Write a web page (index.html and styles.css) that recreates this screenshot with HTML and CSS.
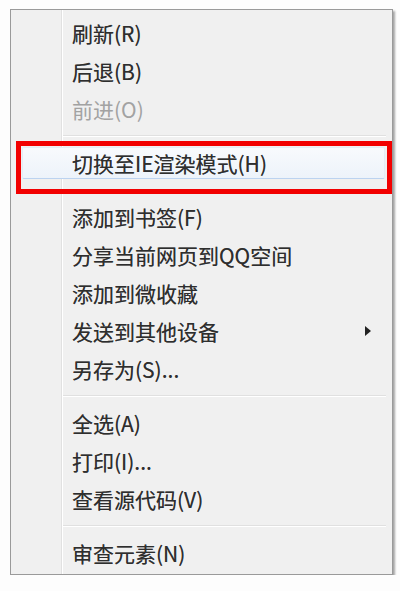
FILE: index.html
```html
<!DOCTYPE html>
<html lang="zh-CN">
<head>
<meta charset="utf-8">
<link rel="stylesheet" href="styles.css">
</head>
<body>
<div class="menu">
  <div class="item">刷新(R)</div>
  <div class="item">后退(B)</div>
  <div class="item disabled">前进(O)</div>
  <div class="sep"></div>
  <div class="item active">切换至IE渲染模式(H)</div>
  <div class="sep"></div>
  <div class="item">添加到书签(F)</div>
  <div class="item">分享当前网页到QQ空间</div>
  <div class="item">添加到微收藏</div>
  <div class="item"><span>发送到其他设备</span><svg class="arrow" width="6" height="10" viewBox="0 0 6 10"><polygon points="0,0 6,5 0,10" fill="#222"/></svg></div>
  <div class="item">另存为(S)...</div>
  <div class="sep"></div>
  <div class="item">全选(A)</div>
  <div class="item">打印(I)...</div>
  <div class="item">查看源代码(V)</div>
  <div class="sep"></div>
  <div class="item">审查元素(N)</div>
</div>
<div class="mark"></div>
</body>
</html>
```
FILE: styles.css
```css
html, body {
  margin: 0;
  padding: 0;
  background: #fdfdfd;
}

body {
  font-family: "Noto Sans CJK SC", "Microsoft YaHei", sans-serif;
  font-size: 21px;
  color: #2e2e2e;
}

.menu {
  margin: 9px 0 0 10px;
  width: 383px;
  box-sizing: border-box;
  border: 1px solid #9a9a9a;
  padding: 4px 2px 2px 2px;
  background: linear-gradient(to right, #f0f0f0 50px, #e1e1e1 50px, #e1e1e1 51px, #ffffff 51px, #ffffff 52px, #f0f0f0 52px);
  box-shadow: 2px 2px 2px rgba(0, 0, 0, 0.35);
}

.item {
  height: 38px;
  display: flex;
  align-items: center;
  justify-content: space-between;
  padding-left: 59px;
  padding-right: 19px;
  text-shadow: 0 0 0.6px rgba(0, 0, 0, 0.5);
  white-space: nowrap;
}

.item.disabled {
  color: #a2a2a2;
  text-shadow: none;
}

.item.active {
  height: 30px;
  margin: 3px 5px 3px 9px;
  padding-left: 49px;
  border: 1px solid #e4ecf6;
  border-bottom-color: #bcd3f0;
  border-radius: 2px;
  background: linear-gradient(#f8fafd, #edf3fa);
}

.arrow {
  display: block;
}

.sep {
  height: 16px;
  display: flex;
  align-items: center;
  padding-left: 50px;
  padding-right: 4px;
}

.sep::before {
  content: "";
  flex: 1;
  height: 1px;
  background: #e0e0e0;
  border-bottom: 1px solid #ffffff;
}

.mark {
  position: absolute;
  left: 16px;
  top: 141px;
  width: 376px;
  height: 53px;
  box-sizing: border-box;
  border: 5px solid #f20000;
}
```
